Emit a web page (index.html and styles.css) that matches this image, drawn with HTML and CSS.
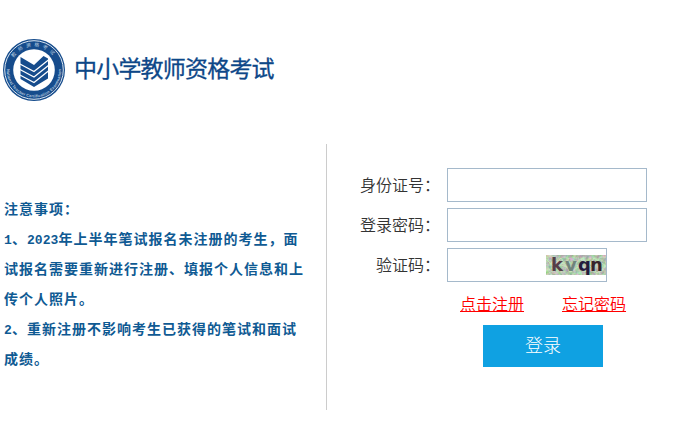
FILE: index.html
```html
<!DOCTYPE html>
<html lang="zh-CN">
<head>
<meta charset="utf-8">
<title>中小学教师资格考试</title>
<link rel="stylesheet" href="styles.css">
</head>
<body>
<header class="header">
  <svg class="logo" viewBox="0 0 64 64" aria-hidden="true">
    <defs>
      <path id="top-arc" d="M8.5 32a23.5 23.5 0 0 1 47 0"/>
      <path id="bottom-arc" d="M5.2 27a27.3 27.3 0 1 0 53.6 0"/>
    </defs>
    <circle cx="32" cy="32" r="31" fill="#164c8c"/>
    <circle cx="32" cy="32" r="29.3" fill="none" stroke="#dbe6f1" stroke-width="1"/>
    <circle cx="32" cy="32" r="20.8" fill="#fff"/>
    <text class="seal-cn"><textPath href="#top-arc" startOffset="50%" text-anchor="middle">教师资格考试</textPath></text>
    <text class="seal-en"><textPath href="#bottom-arc" startOffset="50%" text-anchor="middle" textLength="88">National Teacher Certification Examination</textPath></text>
    <path d="M18.500 19l13.500 8 9.500-9 4.500 2.500v20L32 49l-13.500-8z" fill="#164c8c"/>
    <path d="M17 25.500l15 8 15-12M17 31l15 8 15-12M17 36.500l15 8 15-12" fill="none" stroke="#fff" stroke-width="1.300"/>
  </svg>
  <h1 class="title">中小学教师资格考试</h1>
</header>
<main class="main">
  <section class="notice">
    <p>注意事项：</p>
    <p><span class="num">1</span>、<span class="num">2023</span>年上半年笔试报名未注册的考生，面<br>试报名需要重新进行注册、填报个人信息和上<br>传个人照片。</p>
    <p><span class="num">2</span>、重新注册不影响考生已获得的笔试和面试<br>成绩。</p>
  </section>
  <form class="login">
    <div class="row"><label for="idno">身份证号：</label><input id="idno" class="field" type="text"></div>
    <div class="row"><label for="pwd">登录密码：</label><input id="pwd" class="field" type="password"></div>
    <div class="row"><label for="code">验证码：</label>
      <div class="code-box"><input id="code" type="text">
        <svg class="captcha" viewBox="0 0 60 20">
          <defs>
            <filter id="grain" x="0" y="0" width="100%" height="100%" color-interpolation-filters="sRGB">
              <feTurbulence type="fractalNoise" baseFrequency=".3" numOctaves="2" seed="8"/>
              <feColorMatrix values=".5 0 0 0 .47  0 .5 0 0 .53  .3 0 .3 0 .4  0 0 0 0 1"/>
            </filter>
          </defs>
          <rect width="60" height="20" filter="url(#grain)"/>
          <path d="M0 4l7 7 8-8 9 14 8-5 7 5 9-14 12 8M3 18l12-8 9 3 12-10 15 15 9-7" fill="none" stroke="#c7e8b9" stroke-width=".8"/>
          <g class="captcha-text">
            <text x="5" y="16" fill="#563e48">k</text>
            <text x="19" y="16" fill="#70847b">v</text>
            <text x="32" y="16" fill="#241c3d">q</text>
            <text x="44" y="16" fill="#38242b">n</text>
          </g>
        </svg>
      </div>
    </div>
    <div class="links"><a href="#">点击注册</a><a href="#">忘记密码</a></div>
    <button class="submit" type="button">登录</button>
  </form>
</main>
</body>
</html>
```
FILE: styles.css
```css
* { box-sizing: border-box; }
body {
  margin: 0;
  background: #fff;
  font-family: "Noto Sans CJK SC", sans-serif;
  color: #333;
}
.header {
  display: flex;
  align-items: center;
  height: 144px;
  padding: 0 0 5px 2px;
}
.logo { width: 64px; height: 64px; flex: none; }
.seal-cn { font-size: 5px; letter-spacing: 3px; fill: #b4c8df; }
.seal-en { font: bold 4px "Liberation Sans", sans-serif; fill: #b4c8df; }
.title {
  margin: 0 0 5px 8px;
  font-size: 23px;
  line-height: 32px;
  font-weight: 400;
  letter-spacing: -.8px;
  color: #0d4788;
  -webkit-text-stroke: .3px #0d4788;
  white-space: nowrap;
}
.main { display: flex; height: 266px; }
.notice {
  width: 327px;
  padding: 49px 0 0 4px;
  border-right: 1px solid #ccc;
  font-size: 14px;
  line-height: 30px;
  letter-spacing: 1px;
  font-weight: 700;
  color: #0f5a93;
  white-space: nowrap;
}
.notice p { margin: 0; }
.num {
  font-family: "Liberation Mono", monospace;
  font-size: 13px;
  line-height: 1;
  letter-spacing: .1px;
}
.login { padding-top: 24px; width: 340px; }
.row {
  display: flex;
  align-items: center;
  height: 34px;
  margin-bottom: 6px;
}
.row label {
  width: 120px;
  padding: 0 7px 2px 0;
  text-align: right;
  font-size: 16px;
  line-height: 32px;
  font-weight: 350;
}
.field, .code-box {
  width: 200px;
  height: 34px;
  border: 1px solid #a5b9cb;
  background: #fff;
  outline: 0;
}
.code-box { display: flex; align-items: center; width: 160px; }
.code-box input { width: 98px; height: 30px; border: 0; outline: 0; }
.captcha { width: 60px; height: 20px; }
.captcha-text { font: bold 18px "DejaVu Sans", sans-serif; }
.links {
  display: flex;
  gap: 38px;
  padding-left: 133px;
  margin-top: 1px;
  height: 37px;
  font-size: 16px;
  line-height: 30px;
  font-weight: 350;
}
.links a { color: #f00; text-underline-offset: 1px; }
.submit {
  display: block;
  width: 120px;
  height: 42px;
  margin-left: 156px;
  padding: 0 0 4px;
  border: 0;
  background: #0fa1e2;
  color: #fff;
  font: 300 18px "Noto Sans CJK SC", sans-serif;
}
```
